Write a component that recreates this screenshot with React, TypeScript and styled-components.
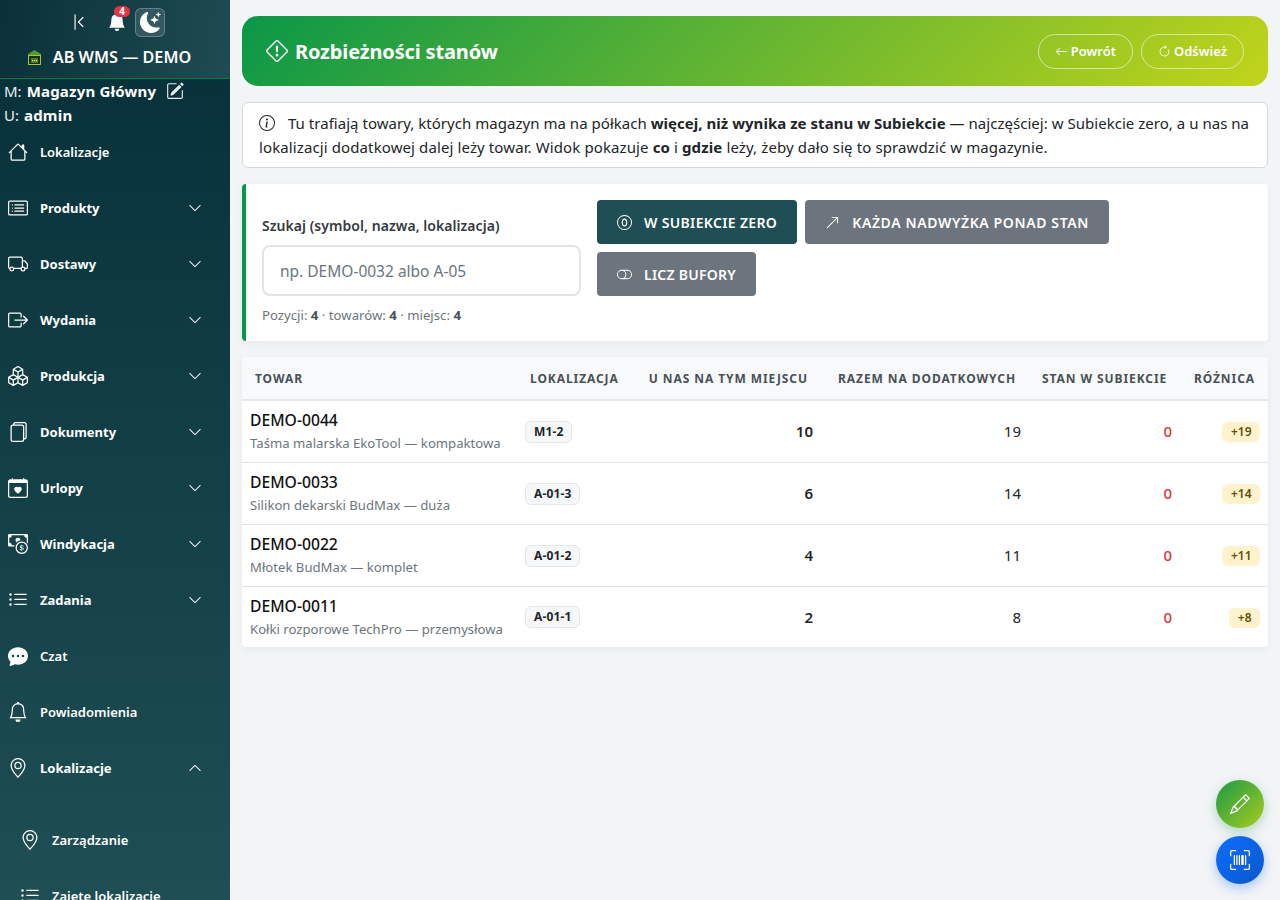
import React from "react";
import styled, { createGlobalStyle } from "styled-components";
import {
  BsChevronBarLeft, BsBellFill, BsMoonStarsFill, BsPencilSquare, BsHouse, BsCardList, BsTruck,
  BsBoxArrowRight, BsBoxes, BsFiles, BsCalendarHeart, BsCashCoin, BsListUl, BsChatDotsFill,
  BsBell, BsGeoAlt, BsChevronDown, BsChevronUp, BsExclamationDiamond, BsInfoCircle, Bs0Circle,
  BsArrowUpRight, BsToggleOff, BsArrowLeft, BsArrowClockwise, BsPencil, BsUpcScan,
} from "react-icons/bs";

const Global = createGlobalStyle`
  html, body { margin: 0; padding: 0; height: 100%; overflow: hidden; }
  body { font-family: "Noto Sans", "Liberation Sans", sans-serif; background: #f3f4f6; color: #212529; }
  * { box-sizing: border-box; }
`;

const Shell = styled.div`display: flex; height: 900px; overflow: hidden;`;
const Sidebar = styled.aside`
  width: 230px; flex: none; height: 900px; overflow: hidden; color: #fff;
  background: linear-gradient(180deg, #062f38 0%, #1f4e54 100%);
`;
const SideHead = styled.div`
  height: 79px; border-bottom: 1px solid #0b7a3e;
  background: linear-gradient(100deg, #0a3038 0%, #1e4c52 100%);
  display: flex; flex-direction: column; align-items: center;
`;
const TopIcons = styled.div`display: flex; align-items: center; height: 30px; margin-top: 7px; margin-left: 5px;`;
const Collapse = styled.span`display: flex; font-size: 18px; color: #fff; margin-right: 20px;`;
const BellWrap = styled.span`position: relative; display: flex; font-size: 18px; margin-right: 9px;`;
const Count = styled.span`
  position: absolute; top: -7px; left: 6px; min-width: 16px; height: 11px; padding: 0 3px;
  background: #dc3545; color: #fff; border-radius: 8px; font-size: 10px; font-weight: 700;
  line-height: 11px; text-align: center;
`;
const ThemeBtn = styled.span`
  width: 30px; height: 29px; display: flex; align-items: center; justify-content: center;
  border: 1px solid rgba(255,255,255,.25); background: rgba(255,255,255,.12); border-radius: 6px; font-size: 21px;
`;
const Brand = styled.div`
  display: flex; align-items: center; gap: 11px; margin-top: 5px; margin-left: -12px; height: 30px;
  font-size: 16.2px; font-weight: 600; white-space: nowrap;
`;
const UserBox = styled.div`padding: 0 0 0 4px; font-size: 15px; line-height: 24px; height: 53px; color: #e9eef0;`;
const UserLine = styled.div`display: flex; align-items: center; gap: 5px;`;
const Strong = styled.strong`font-weight: 700; color: #fff; letter-spacing: .2px;`;
const EditIcon = styled.span`display: flex; font-size: 18px; margin-left: 5px;`;
const Nav = styled.nav`display: flex; flex-direction: column; gap: 16px;`;
const Item = styled.div<{ $sub?: boolean }>`
  height: 40px; flex: none; display: flex; align-items: center; position: relative;
  padding-left: ${(p) => (p.$sub ? "20px" : "8px")}; gap: 12px; font-size: 13px; color: #fff;
`;
const ItemIcon = styled.span`display: flex; font-size: 20px; width: 20px; justify-content: center;`;
const ItemText = styled.span<{ $bold?: boolean }>`font-weight: ${(p) => (p.$bold ? 700 : 600)};`;
const Caret = styled.span`position: absolute; left: 188px; display: flex; font-size: 14px;`;
const SubNav = styled.div`display: flex; flex-direction: column; gap: 16px; padding-top: 32px;`;

const Main = styled.main`flex: 1; min-width: 0; padding: 16px 12px; display: flex; flex-direction: column; gap: 16px;`;
const Hero = styled.header`
  height: 70px; flex: none; border-radius: 16px; padding: 0 24px; color: #fff;
  display: flex; align-items: center; justify-content: space-between;
  background: linear-gradient(135deg, #0a9748 0%, #c2d41a 100%);
`;
const HeroTitle = styled.h1`margin: 0; display: flex; align-items: center; gap: 7px; font-size: 20px; font-weight: 700; letter-spacing: -.15px;`;
const HeroActions = styled.div`display: flex; gap: 8px;`;
const Ghost = styled.span`
  height: 35px; display: flex; align-items: center; gap: 3px; padding: 0 16px;
  border: 1px solid rgba(255,255,255,.55); border-radius: 18px; font-size: 13px; font-weight: 600; color: #fff;
`;
const Info = styled.div`
  height: 66px; flex: none; background: #fff; border: 1px solid #d6d8db; border-radius: 6px;
  padding: 0 8px 0 16px; font-size: 15px; line-height: 24px; display: flex; flex-direction: column; justify-content: center; color: #212529;
`;
const InfoLine = styled.div<{ $ls: number }>`letter-spacing: ${(p) => p.$ls}px; white-space: nowrap;`;
const InfoIcon = styled.span`display: inline-flex; font-size: 16px; vertical-align: -2px; margin-right: 13px;`;
const B = styled.strong`font-weight: 700;`;
const Filter = styled.section`
  height: 157px; flex: none; background: #fff; border-left: 4px solid #0a9748; border-radius: 4px; padding: 16px;
  display: flex; gap: 16px; box-shadow: 0 2px 8px rgba(0,0,0,.05);
`;
const SearchCol = styled.div`width: 319px; flex: none; padding-top: 16px;`;
const Label = styled.div`font-size: 14px; font-weight: 600; letter-spacing: .05px; line-height: 20px; color: #343a40; margin-bottom: 9px; height: 20px;`;
const Input = styled.input`
  display: block; width: 100%; height: 51px; border: 2px solid #e3e3e3; border-radius: 8px; padding: 0 16px; outline: none;
  font: 400 15.5px "Noto Sans", sans-serif; color: #212529;
  &::placeholder { color: #6c757d; opacity: 1; }
`;
const Stats = styled.div`margin-top: 10px; font-size: 13.2px; line-height: 18px; color: #6c757d;`;
const StatB = styled.b`font-weight: 700; color: #495057;`;
const Buttons = styled.div`flex: 1; display: flex; flex-wrap: wrap; gap: 8px; align-content: flex-start;`;
const Toggle = styled.span<{ $active?: boolean; $ls: number }>`
  height: 44px; padding: 0 20px; display: flex; align-items: center; gap: 12px; border-radius: 4px;
  background: ${(p) => (p.$active ? "#1f4e54" : "#6c757d")}; color: #fff; font-size: 14px; font-weight: 600;
  letter-spacing: ${(p) => p.$ls}px; white-space: nowrap;
`;
const ToggleIcon = styled.span`display: flex; font-size: 15px;`;
const TableCard = styled.section`background: #fff; border-radius: 4px; box-shadow: 0 2px 8px rgba(0,0,0,.05); overflow: hidden; flex: none;`;
const Table = styled.table`width: 100%; border-collapse: collapse; table-layout: fixed;`;
const Th = styled.th<{ $r?: boolean }>`
  height: 43px; padding: 0 13px; background: #f8f9fb; border-bottom: 2px solid #e4e7ee;
  text-align: ${(p) => (p.$r ? "right" : "left")}; font-size: 12px; font-weight: 700; letter-spacing: .92px;
  color: #495057; white-space: nowrap;
`;
const Tr = styled.tr`height: 62px; border-bottom: 1px solid #e4e5e8; &:last-child { border-bottom: 0; height: 61px; }`;
const Td = styled.td<{ $r?: boolean }>`padding: 0 8px; text-align: ${(p) => (p.$r ? "right" : "left")}; font-size: 15px; white-space: nowrap;`;
const Symbol = styled.div`font-size: 15.7px; font-weight: 500; line-height: 22px; color: #111;`;
const Desc = styled.div`font-size: 13.15px; line-height: 20px; margin-top: 2px; color: #6c757d;`;
const Pill = styled.span`
  display: inline-block; height: 22px; line-height: 20px; padding: 0 8px; background: #f6f7f9; border: 1px solid #e3e6ea;
  border-radius: 6px; font-size: 12px; font-weight: 700; letter-spacing: .15px; color: #212529;
`;
const Here = styled.span`font-weight: 600;`;
const Zero = styled.span`color: #dc3545; font-weight: 500;`;
const Diff = styled.span`
  display: inline-block; height: 20px; line-height: 20px; padding: 0 8.5px; border-radius: 6px; background: #fff3cd; color: #664d03;
  font-size: 12px; font-weight: 600;
`;
const Fab = styled.span<{ $bg: string; $glow: string; $b: number }>`
  position: absolute; right: 16px; bottom: ${(p) => p.$b}px; width: 48px; height: 48px; border-radius: 50%;
  display: flex; align-items: center; justify-content: center; color: #fff; font-size: 20px;
  background: ${(p) => p.$bg}; box-shadow: 0 4px 12px ${(p) => p.$glow};
`;

const WarehouseLogo = () => (
  <svg width="15" height="15" viewBox="0 0 15 15">
    <path d="M7.5 0 14 4v2H1V4z" fill="#4f9a35" />
    <rect x="1.5" y="5.5" width="12" height="9" fill="#16330f" stroke="#a6c23a" strokeWidth="1" />
    <rect x="4" y="8" width="7" height="5" fill="#54742a" />
    <rect x="5" y="10" width="1.2" height="1.2" fill="#d8e27a" />
    <rect x="7" y="10" width="1.2" height="1.2" fill="#d8e27a" />
    <rect x="9" y="10" width="1.2" height="1.2" fill="#d8e27a" />
  </svg>
);

const menu: [React.ElementType, string, boolean][] = [
  [BsHouse, "Lokalizacje", false],
  [BsCardList, "Produkty", true],
  [BsTruck, "Dostawy", true],
  [BsBoxArrowRight, "Wydania", true],
  [BsBoxes, "Produkcja", true],
  [BsFiles, "Dokumenty", true],
  [BsCalendarHeart, "Urlopy", true],
  [BsCashCoin, "Windykacja", true],
  [BsListUl, "Zadania", true],
  [BsChatDotsFill, "Czat", false],
  [BsBell, "Powiadomienia", false],
];
const rows = [
  ["DEMO-0044", "Taśma malarska EkoTool — kompaktowa", "M1-2", "10", "19", "+19"],
  ["DEMO-0033", "Silikon dekarski BudMax — duża", "A-01-3", "6", "14", "+14"],
  ["DEMO-0022", "Młotek BudMax — komplet", "A-01-2", "4", "11", "+11"],
  ["DEMO-0011", "Kołki rozporowe TechPro — przemysłowa", "A-01-1", "2", "8", "+8"],
];
const widths = [275, 118, 186, 208, 151, 88];

export default function App() {
  return (
    <Shell>
      <Global />
      <Sidebar>
        <SideHead>
          <TopIcons>
            <Collapse><BsChevronBarLeft /></Collapse>
            <BellWrap><BsBellFill /><Count>4</Count></BellWrap>
            <ThemeBtn><BsMoonStarsFill /></ThemeBtn>
          </TopIcons>
          <Brand><WarehouseLogo />AB WMS — DEMO</Brand>
        </SideHead>
        <UserBox>
          <UserLine>M: <Strong>Magazyn Główny</Strong> <EditIcon><BsPencilSquare /></EditIcon></UserLine>
          <UserLine>U: <Strong>admin</Strong></UserLine>
        </UserBox>
        <Nav>
          {menu.map(([Icon, label, hasSub]) => (
            <Item key={label}>
              <ItemIcon><Icon /></ItemIcon>
              <ItemText $bold={hasSub}>{label}</ItemText>
              {hasSub && <Caret><BsChevronDown /></Caret>}
            </Item>
          ))}
          <div>
            <Item>
              <ItemIcon><BsGeoAlt /></ItemIcon>
              <ItemText $bold>Lokalizacje</ItemText>
              <Caret><BsChevronUp /></Caret>
            </Item>
            <SubNav>
              <Item $sub><ItemIcon><BsGeoAlt /></ItemIcon><ItemText>Zarządzanie</ItemText></Item>
              <Item $sub><ItemIcon><BsListUl /></ItemIcon><ItemText>Zajęte lokalizacje</ItemText></Item>
            </SubNav>
          </div>
        </Nav>
      </Sidebar>
      <Main>
        <Hero>
          <HeroTitle><BsExclamationDiamond size={22} />Rozbieżności stanów</HeroTitle>
          <HeroActions>
            <Ghost><BsArrowLeft />Powrót</Ghost>
            <Ghost><BsArrowClockwise />Odśwież</Ghost>
          </HeroActions>
        </Hero>
        <Info>
          <InfoLine $ls={0.03}>
            <InfoIcon><BsInfoCircle /></InfoIcon>
            Tu trafiają towary, których magazyn ma na półkach <B>więcej, niż wynika ze stanu w Subiekcie</B> — najczęściej: w Subiekcie zero, a u nas na
          </InfoLine>
          <InfoLine $ls={0.11}>
            lokalizacji dodatkowej dalej leży towar. Widok pokazuje <B>co</B> i <B>gdzie</B> leży, żeby dało się to sprawdzić w magazynie.
          </InfoLine>
        </Info>
        <Filter>
          <SearchCol>
            <Label>Szukaj (symbol, nazwa, lokalizacja)</Label>
            <Input placeholder="np. DEMO-0032 albo A-05" readOnly />
            <Stats>Pozycji: <StatB>4</StatB> · towarów: <StatB>4</StatB> · miejsc: <StatB>4</StatB></Stats>
          </SearchCol>
          <Buttons>
            <Toggle $active $ls={0.35}><ToggleIcon><Bs0Circle /></ToggleIcon>W SUBIEKCIE ZERO</Toggle>
            <Toggle $ls={0.62}><ToggleIcon><BsArrowUpRight /></ToggleIcon>KAŻDA NADWYŻKA PONAD STAN</Toggle>
            <Toggle $ls={0.25}><ToggleIcon><BsToggleOff /></ToggleIcon>LICZ BUFORY</Toggle>
          </Buttons>
        </Filter>
        <TableCard>
          <Table>
            <colgroup>{widths.map((w, i) => <col key={i} width={w} />)}</colgroup>
            <thead>
              <tr>
                <Th>TOWAR</Th>
                <Th>LOKALIZACJA</Th>
                <Th $r>U NAS NA TYM MIEJSCU</Th>
                <Th $r>RAZEM NA DODATKOWYCH</Th>
                <Th $r>STAN W SUBIEKCIE</Th>
                <Th $r>RÓŻNICA</Th>
              </tr>
            </thead>
            <tbody>
              {rows.map((r) => (
                <Tr key={r[0]}>
                  <Td><Symbol>{r[0]}</Symbol><Desc>{r[1]}</Desc></Td>
                  <Td><Pill>{r[2]}</Pill></Td>
                  <Td $r><Here>{r[3]}</Here></Td>
                  <Td $r>{r[4]}</Td>
                  <Td $r><Zero>0</Zero></Td>
                  <Td $r><Diff>{r[5]}</Diff></Td>
                </Tr>
              ))}
            </tbody>
          </Table>
        </TableCard>
      </Main>
      <Fab $b={72} $bg="linear-gradient(135deg,#1a9a44,#a8cc20)" $glow="rgba(10,151,72,.3)"><BsPencil /></Fab>
      <Fab $b={16} $bg="linear-gradient(135deg,#0d6efd,#0a58ca)" $glow="rgba(13,110,253,.35)"><BsUpcScan /></Fab>
    </Shell>
  );
}
